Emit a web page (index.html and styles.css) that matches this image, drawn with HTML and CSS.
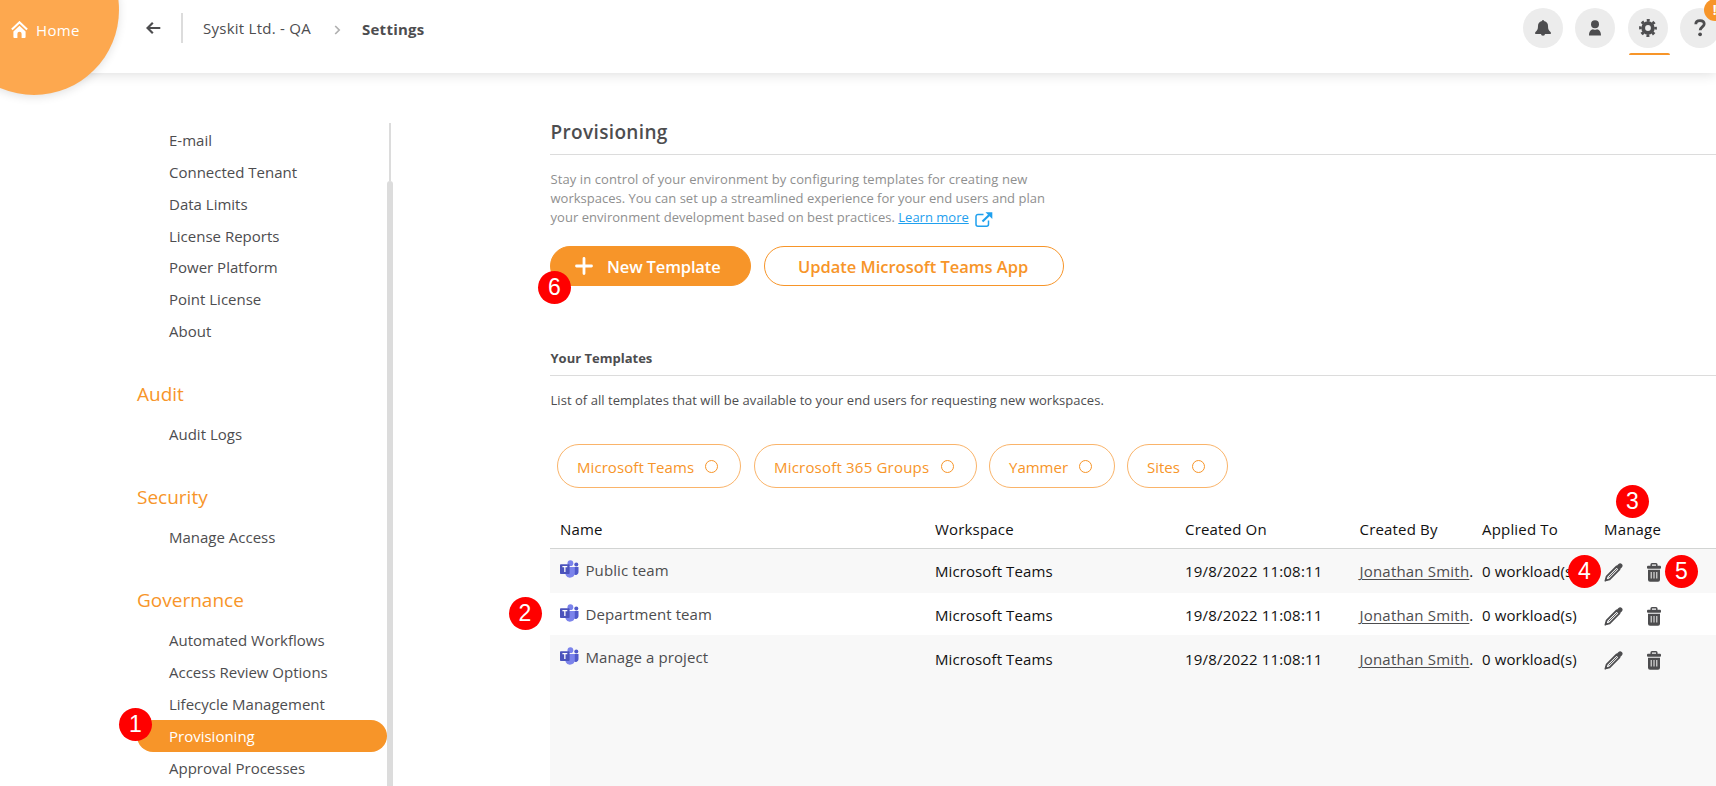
FILE: index.html
```
<!DOCTYPE html>
<html lang="en">
<head>
<meta charset="utf-8">
<title>Settings - Provisioning</title>
<link rel="stylesheet" href="styles.css">
</head>
<body>
<svg class="defs" width="0" height="0">
  <symbol id="teams" viewBox="0 0 19 19">
    <circle cx="16.3" cy="4.4" r="2" fill="#5059c9"/>
    <path d="M13 7h5.5v5.300a2.800 2.800 0 0 1-4.600 2z" fill="#5059c9"/>
    <circle cx="10.4" cy="3.2" r="2.9" fill="#7b83eb"/>
    <path d="M5.600 7h9.200v6.200a4.900 4.900 0 0 1-9.200 1.800z" fill="#7b83eb"/>
    <rect x="0" y="4.3" width="9.6" height="9.8" rx=".8" fill="#4b53bc"/>
    <path d="M2.400 6.700h4.900M4.850 6.700v5.200" stroke="#fff" stroke-width="1.3" fill="none"/>
  </symbol>
  <symbol id="pencil" viewBox="0 0 19 19">
    <path d="M1.500 17.500l1.200-4.200L12.600 3.500l2.900 2.900L5.600 16.300z" fill="none" stroke="#4d4d4f" stroke-width="1.800" stroke-linejoin="round"/>
    <path d="M4.800 14.300l8.200-8.200" stroke="#4d4d4f" stroke-width="1"/>
    <path d="M12.600 3l1.900-1.900a2.100 2.100 0 0 1 3.300 3.300l-1.900 1.900zM.6 18.400l1-3.200 2.200 2.200z" fill="#4d4d4f"/>
  </symbol>
  <symbol id="trash" viewBox="0 0 14 19">
    <path d="M4.200 3V1.600a.8.8 0 0 1 .8-.8h4a.8.8 0 0 1 .8.8V3" fill="none" stroke="#4d4d4f" stroke-width="1.500"/>
    <rect x="0" y="2.700" width="14" height="3" rx="1" fill="#4d4d4f"/>
    <path d="M1 6.700h12v10.100a2 2 0 0 1-2 2H3a2 2 0 0 1-2-2z" fill="#4d4d4f"/>
    <path d="M4.200 9v6.500M7 9v6.500M9.800 9v6.500" stroke="#f5f5f5" stroke-width="1"/>
  </symbol>
</svg>

<header class="topbar">
  <a class="home"><svg width="17" height="17" viewBox="0 0 17 17"><path d="M.9 8.600L8.500 1.300l7.600 7.300" fill="none" stroke="#fff" stroke-width="2.100"/><path d="M2.400 10.500l6.100-5.700 6.100 5.700V16a1 1 0 0 1-1 1h-3v-4.200a2.100 2.100 0 0 0-4.200 0V17h-3a1 1 0 0 1-1-1z" fill="#fff"/></svg><span class="home-text">Home</span></a>
  <svg class="back" width="15" height="12" viewBox="0 0 15 12"><path d="M14.300 6H1.500M6.800 .8L1.500 6l5.300 5.200" fill="none" stroke="#4d4d4f" stroke-width="2.200"/></svg>
  <i class="divider"></i>
  <span class="crumb">Syskit Ltd. - QA</span>
  <svg class="chev" width="7" height="10" viewBox="0 0 7 10"><path d="M1.200 1l4 4-4 4" fill="none" stroke="#b0b0b0" stroke-width="1.700"/></svg>
  <span class="crumb current">Settings</span>
  <nav class="tools">
    <a class="tool"><svg width="16" height="16" viewBox="0 0 16 16" fill="#4d4d4f"><path d="M7 1a1 1 0 0 1 2 0c3 .6 4 2.800 4 5 0 3.500.8 4.600 2.800 6.200v1.800H.2v-1.800C2.200 10.600 3 9.500 3 6c0-2.200 1-4.400 4-5zM6 14h4a2 1.700 0 0 1-4 0z"/></svg></a>
    <a class="tool"><svg width="14" height="16" viewBox="0 0 14 16" fill="#4d4d4f"><circle cx="7" cy="4.200" r="4"/><path d="M1 15.500c0-4 2-6 4-6.200q2 1 4 0c2 .2 4 2.200 4 6.200z"/></svg></a>
    <a class="tool active"><svg width="18" height="18" viewBox="0 0 18 18"><circle cx="9" cy="9" r="4.800" fill="none" stroke="#4d4d4f" stroke-width="3.800"/><circle cx="9" cy="9" r="7.600" fill="none" stroke="#4d4d4f" stroke-width="2.600" stroke-dasharray="2.985 2.985" stroke-dashoffset="1.490"/></svg></a>
    <a class="tool"><svg width="12" height="18" viewBox="0 0 12 18"><path d="M1.800 5.200C1.800 3 3.400 1.700 6 1.700s4.200 1.300 4.200 3.300c0 2.700-4 3-4 6.200" fill="none" stroke="#4d4d4f" stroke-width="2.800"/><circle cx="6.100" cy="15.300" r="1.900" fill="#4d4d4f"/></svg><b class="alert">!</b></a>
  </nav>
</header>

<div class="body">
  <aside class="sidebar">
    <ul class="menu first">
      <li>E-mail</li><li>Connected Tenant</li><li>Data Limits</li><li>License Reports</li><li>Power Platform</li><li>Point License</li><li>About</li>
    </ul>
    <h3 class="group">Audit</h3>
    <ul class="menu"><li>Audit Logs</li></ul>
    <h3 class="group">Security</h3>
    <ul class="menu"><li>Manage Access</li></ul>
    <h3 class="group">Governance</h3>
    <ul class="menu">
      <li>Automated Workflows</li><li>Access Review Options</li><li>Lifecycle Management</li>
      <li class="selected">Provisioning<b class="mark mark-1">1</b></li>
      <li>Approval Processes</li>
    </ul>
  </aside>
  <div class="scroll"><i class="track"></i><i class="thumb"></i></div>

  <main class="main">
    <h1 class="title">Provisioning</h1>
    <p class="intro"><span class="l1">Stay in control of your environment by configuring templates for creating new</span><br><span class="l2">workspaces. You can set up a streamlined experience for your end users and plan</span><br><span class="l3">your environment development based on best practices.</span> <a class="learn">Learn more</a><svg class="ext" width="18" height="15" viewBox="0 0 18 15"><path d="M8.500 2.500H3A2 2 0 0 0 1 4.500v7.700A2 2 0 0 0 3 14.200h8.500a2 2 0 0 0 2-2V8.500" fill="none" stroke="#1fa0ee" stroke-width="1.500"/><path d="M7.500 9.500l6.500-6.300" stroke="#1fa0ee" stroke-width="2.200"/><path d="M10.500.3H17.300V7z" fill="#1fa0ee"/></svg></p>
    <div class="actions">
      <button class="btn primary"><svg width="18" height="18" viewBox="0 0 18 18"><path d="M9 1.500v15M1.500 9h15" stroke="#fff" stroke-width="2.800" stroke-linecap="round"/></svg><span class="btn-new">New Template</span><b class="mark mark-6">6</b></button>
      <button class="btn outline"><span class="btn-upd">Update Microsoft Teams App</span></button>
    </div>
    <h2 class="subtitle">Your Templates</h2>
    <p class="list-note">List of all templates that will be available to your end users for requesting new workspaces.</p>
    <div class="chips">
      <span class="chip c1"><span>Microsoft Teams</span><i></i></span>
      <span class="chip c2"><span>Microsoft 365 Groups</span><i></i></span>
      <span class="chip c3"><span>Yammer</span><i></i></span>
      <span class="chip c4"><span>Sites</span><i></i></span>
    </div>
    <div class="table">
      <div class="row head"><span>Name</span><span>Workspace</span><span>Created On</span><span>Created By</span><span>Applied To</span><span class="manage">Manage<b class="mark mark-3">3</b></span></div>
      <div class="row r1"><span class="name"><svg width="19" height="19"><use href="#teams"/></svg>Public team</span><span>Microsoft Teams</span><span class="date">19/8/2022 11:08:11</span><span class="by"><u>Jonathan Smith</u>.</span><span class="load">0 workload(s)</span><span class="manage"><svg width="19" height="19"><use href="#pencil"/></svg><svg width="14" height="19"><use href="#trash"/></svg><b class="mark mark-4">4</b><b class="mark mark-5">5</b></span></div>
      <div class="row r2"><span class="name"><svg width="19" height="19"><use href="#teams"/></svg>Department team<b class="mark mark-2">2</b></span><span>Microsoft Teams</span><span class="date">19/8/2022 11:08:11</span><span class="by"><u>Jonathan Smith</u>.</span><span class="load">0 workload(s)</span><span class="manage"><svg width="19" height="19"><use href="#pencil"/></svg><svg width="14" height="19"><use href="#trash"/></svg></span></div>
      <div class="row r3"><span class="name"><svg width="19" height="19"><use href="#teams"/></svg>Manage a project</span><span>Microsoft Teams</span><span class="date">19/8/2022 11:08:11</span><span class="by"><u>Jonathan Smith</u>.</span><span class="load">0 workload(s)</span><span class="manage"><svg width="19" height="19"><use href="#pencil"/></svg><svg width="14" height="19"><use href="#trash"/></svg></span></div>
      <div class="rest"></div>
    </div>
  </main>
</div>
</body>
</html>
```
FILE: styles.css
```
* { box-sizing: border-box; }
html, body { height: 786px; overflow: hidden; }
body { margin: 0; background: #fff; color: #4d4d4f; font: 15px/20px "Open Sans", "Noto Sans", sans-serif; display: flex; flex-direction: column; white-space: nowrap; }
h1, h2, h3, p, ul { margin: 0; padding: 0; }
ul { list-style: none; }
svg { display: block; flex: none; }
.defs { position: absolute; }

.topbar { height: 73px; flex: none; display: flex; position: relative; z-index: 2; box-shadow: 0 1px 12px rgba(0,0,0,.14); background: #fff; padding-left: 146px; align-items: flex-start; }
.home { position: absolute; left: -51px; top: -75px; width: 170px; height: 170px; border-radius: 50%; background: #fda84f; color: #fff; padding: 96px 0 0 62px; display: flex; gap: 8px; box-shadow: 0 2px 10px rgba(0,0,0,.12); }
.home-text { line-height: 18px; letter-spacing: .35px; }
.back { margin-top: 22px; }
.divider { width: 2px; height: 30px; background: #dcdcdc; margin: 13px 20px 0; }
.crumb { margin-top: 18px; width: 131px; letter-spacing: .25px; }
.chev { margin-top: 25px; }
.current { font-weight: 700; margin: 19px 0 0 21px; }
.tools { position: absolute; left: 1523px; top: 8px; display: grid; grid-template-columns: repeat(4, 40px); column-gap: 12.4px; }
.tool { position: relative; width: 40px; height: 40px; border-radius: 50%; background: #ececec; display: flex; align-items: center; justify-content: center; }
.active::after { content: ""; position: absolute; left: 1px; top: 45px; width: 41px; height: 2px; border-radius: 2px 2px 0 0; background: #f79529; }
.alert { position: absolute; left: 23.500px; top: -1px; width: 22px; height: 22px; border-radius: 50%; background: #f79529; color: #fff; font-size: 14px; line-height: 22px; text-align: center; margin-top: -8px; }

.body { flex: 1; display: flex; min-height: 0; }
.sidebar { width: 387px; padding: 51px 0 0 137px; flex: none; }
.menu li { height: 32px; line-height: 32px; padding-left: 32px; position: relative; }
.menu.first li { height: 31.86px; }
.group { font-weight: 400; font-size: 19px; line-height: 26px; color: #f79529; margin: 34px 0 11px; }
.selected { background: #f79529; color: #fff; border-radius: 16px; }
.scroll { width: 6px; flex: none; display: flex; flex-direction: column; align-items: center; padding-top: 50px; }
.track { width: 2px; height: 58px; background: #dcdcdc; }
.thumb { width: 6px; flex: 1; background: #dcdcdc; border-radius: 3px 3px 0 0; }

.main { flex: 1; padding: 39px 0 0 157px; display: flex; flex-direction: column; min-width: 0; }
.title { font-size: 19px; line-height: 40px; height: 43px; font-weight: 600; border-bottom: 1px solid #dcdcdc; letter-spacing: .35px; padding-left: .5px; }
.intro { font-size: 13px; line-height: 19px; color: #8f8f8f; margin-top: 15px; padding-left: .5px; }
.l1 { letter-spacing: .09px; }
.l3 { letter-spacing: .04px; }
.learn { color: #1fa0ee; text-decoration: underline; }
.ext { display: inline-block; vertical-align: -5px; margin-left: 6px; }
.actions { display: flex; gap: 13px; margin-top: 19px; }
.btn { position: relative; height: 40px; border-radius: 20px; border: 1px solid #f79529; font: 600 16.5px/38px "Open Sans", sans-serif; padding: 0; display: flex; align-items: center; }
.btn > span { padding-top: 1px; }
.primary { width: 201px; background: #f79529; color: #fff; padding-left: 24px; gap: 14px; letter-spacing: -.14px; }
.outline { width: 300px; background: #fff; color: #f79529; padding-left: 33px; letter-spacing: -.02px; }
.subtitle { font-size: 13px; line-height: 20px; font-weight: 700; margin-top: 62px; height: 28px; border-bottom: 1px solid #dcdcdc; padding-left: .5px; }
.list-note { font-size: 13px; margin-top: 14px; letter-spacing: .04px; padding-left: .5px; }
.chips { display: flex; gap: 12px; margin: 34px 0 0 7px; }
.chip { height: 44px; border: 1px solid #fab46a; border-radius: 22px; color: #f79529; display: flex; align-items: center; justify-content: space-between; padding: 1px 22px 0 19px; }
.chip i { width: 13px; height: 13px; border: 1.5px solid #f79529; border-radius: 50%; }
.c1 { width: 184px; margin-right: 1px; letter-spacing: .07px; } .c2 { width: 223px; letter-spacing: .2px; } .c3 { width: 126px; } .c4 { width: 101px; }
.table { flex: 1; display: flex; flex-direction: column; color: #111; margin-top: 21px; letter-spacing: .1px; }
.row { display: grid; grid-template-columns: 375px 250px 174.5px 122.5px 122px 102px; padding-left: 10px; line-height: 20px; flex: none; }
.head { height: 40px; padding-top: 10px; border-bottom: 1px solid #d2d4d3; letter-spacing: .18px; }
.r1 { height: 44px; padding-top: 12px; background: #f8f8f8; }
.r2 { height: 42px; padding-top: 12px; }
.r3 { height: 44px; padding-top: 14px; background: #f8f8f8; }
.rest { flex: 1; background: #f8f8f8; }
.name { color: #4d4d4f; display: flex; gap: 7px; margin: -1px 0 0 -.5px; position: relative; }
.r3 .name { margin-top: -2px; }
.date { letter-spacing: .18px; }
.by u { color: #4d4d4f; text-underline-offset: 2px; letter-spacing: .2px; }
.manage { position: relative; display: flex; gap: 24px; }
.manage svg { margin-top: 1.500px; }

.mark { position: absolute; z-index: 5; width: 33px; height: 33px; border-radius: 50%; background: #f00; color: #fff; font: 400 23px/33px "Liberation Sans", sans-serif; text-align: center; letter-spacing: 0; }
.mark-1 { left: -18px; top: -12px; }
.mark-2 { left: -51px; top: -7px; }
.mark-3 { left: 12px; top: -34px; }
.mark-4 { left: -36px; top: -6px; }
.mark-5 { left: 61px; top: -6px; }
.mark-6 { left: -13px; top: 24px; }
```
